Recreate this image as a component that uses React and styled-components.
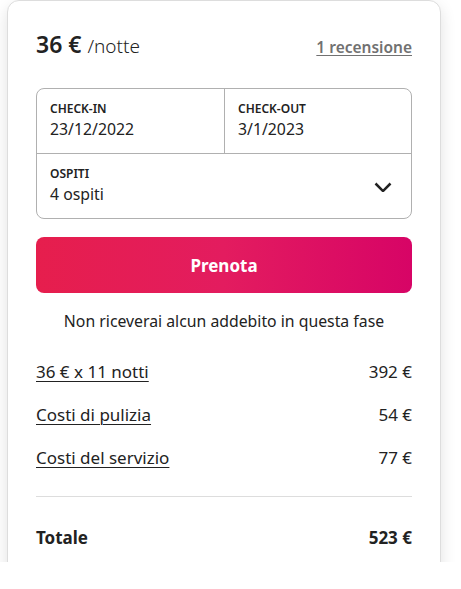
import React from "react";
import styled, { createGlobalStyle } from "styled-components";

const GlobalStyle = createGlobalStyle`
  html, body {
    margin: 0;
    padding: 0;
    background: #ffffff;
  }
  body {
    font-family: "Noto Sans", "Liberation Sans", sans-serif;
    color: #222222;
  }
`;

const Viewport = styled.div`
  height: 562px;
  overflow: hidden;
  padding-left: 7px;
`;

const Card = styled.div`
  width: 434px;
  box-sizing: border-box;
  border: 1px solid #dddddd;
  border-radius: 12px;
  box-shadow: rgba(0, 0, 0, 0.12) 0 6px 16px;
  padding: 28px 28px 40px;
  background: #ffffff;
`;

const Header = styled.div`
  display: flex;
  justify-content: space-between;
  align-items: baseline;
`;

const Price = styled.div`
  display: flex;
  align-items: baseline;
  gap: 6px;
`;

const Amount = styled.span`
  font-size: 23px;
  font-weight: 600;
  line-height: 30px;
`;

const Unit = styled.span`
  font-size: 19px;
  font-weight: 300;
`;

const ReviewLink = styled.a`
  font-size: 15.5px;
  font-weight: 600;
  color: #717171;
  text-decoration: underline;
  text-underline-offset: 2px;
`;

const Picker = styled.div`
  margin-top: 29px;
  border: 1px solid #b0b0b0;
  border-radius: 8px;
  display: grid;
  grid-template-columns: 1fr 1fr;
`;

const Field = styled.div`
  padding: 13px 12px 14px 13px;
  display: flex;
  align-items: center;
  justify-content: space-between;
  grid-column: ${(p) => (p.$wide ? "1 / span 2" : "auto")};
  border-left: ${(p) => (p.$divided ? "1px solid #b0b0b0" : "none")};
  border-top: ${(p) => (p.$wide ? "1px solid #b0b0b0" : "none")};
  padding-right: ${(p) => (p.$wide ? "18px" : "12px")};
`;

const Label = styled.div`
  font-size: 12px;
  font-weight: 600;
  line-height: 14px;
  text-transform: uppercase;
`;

const Value = styled.div`
  font-size: 15.8px;
  line-height: 20px;
  margin-top: 3px;
`;

const BookButton = styled.button`
  display: block;
  width: 100%;
  height: 56px;
  margin-top: 18px;
  border: none;
  border-radius: 8px;
  background: linear-gradient(to right, #e61e4d 0%, #e31c5f 50%, #d70466 100%);
  color: #ffffff;
  font-family: inherit;
  font-size: 17px;
  font-weight: 700;
  cursor: pointer;
`;

const Notice = styled.p`
  margin: 18px 0 0;
  text-align: center;
  font-size: 15.8px;
  line-height: 20px;
`;

const Breakdown = styled.div`
  margin-top: 30px;
  display: flex;
  flex-direction: column;
  gap: 21px;
`;

const Line = styled.div`
  display: flex;
  justify-content: space-between;
  font-size: 17px;
  line-height: 22px;
  font-weight: ${(p) => (p.$total ? 700 : 400)};
`;

const Item = styled.span`
  text-decoration: ${(p) => (p.$link ? "underline" : "none")};
  text-underline-offset: 3px;
  text-decoration-thickness: 1px;
`;

const Divider = styled.hr`
  border: none;
  border-top: 1px solid #dddddd;
  margin: 27px 0 30px;
`;

const Chevron = () => (
  <svg width="20" height="20" viewBox="0 0 32 32" fill="none" stroke="#222" strokeWidth="4">
    <path d="M28 12 16.7 23.3a1 1 0 0 1-1.4 0L4 12" />
  </svg>
);

const fees = [
  ["36 € x 11 notti", "392 €"],
  ["Costi di pulizia", "54 €"],
  ["Costi del servizio", "77 €"],
];

export default function App() {
  return (
    <>
      <GlobalStyle />
      <Viewport>
        <Card>
          <Header>
            <Price>
              <Amount>36 €</Amount>
              <Unit>/notte</Unit>
            </Price>
            <ReviewLink>1 recensione</ReviewLink>
          </Header>

          <Picker>
            <Field>
              <div>
                <Label>Check-in</Label>
                <Value>23/12/2022</Value>
              </div>
            </Field>
            <Field $divided>
              <div>
                <Label>Check-out</Label>
                <Value>3/1/2023</Value>
              </div>
            </Field>
            <Field $wide>
              <div>
                <Label>Ospiti</Label>
                <Value>4 ospiti</Value>
              </div>
              <Chevron />
            </Field>
          </Picker>

          <BookButton>Prenota</BookButton>
          <Notice>Non riceverai alcun addebito in questa fase</Notice>

          <Breakdown>
            {fees.map(([name, price]) => (
              <Line key={name}>
                <Item $link>{name}</Item>
                <Item>{price}</Item>
              </Line>
            ))}
          </Breakdown>

          <Divider />

          <Line $total>
            <Item>Totale</Item>
            <Item>523 €</Item>
          </Line>
        </Card>
      </Viewport>
    </>
  );
}
